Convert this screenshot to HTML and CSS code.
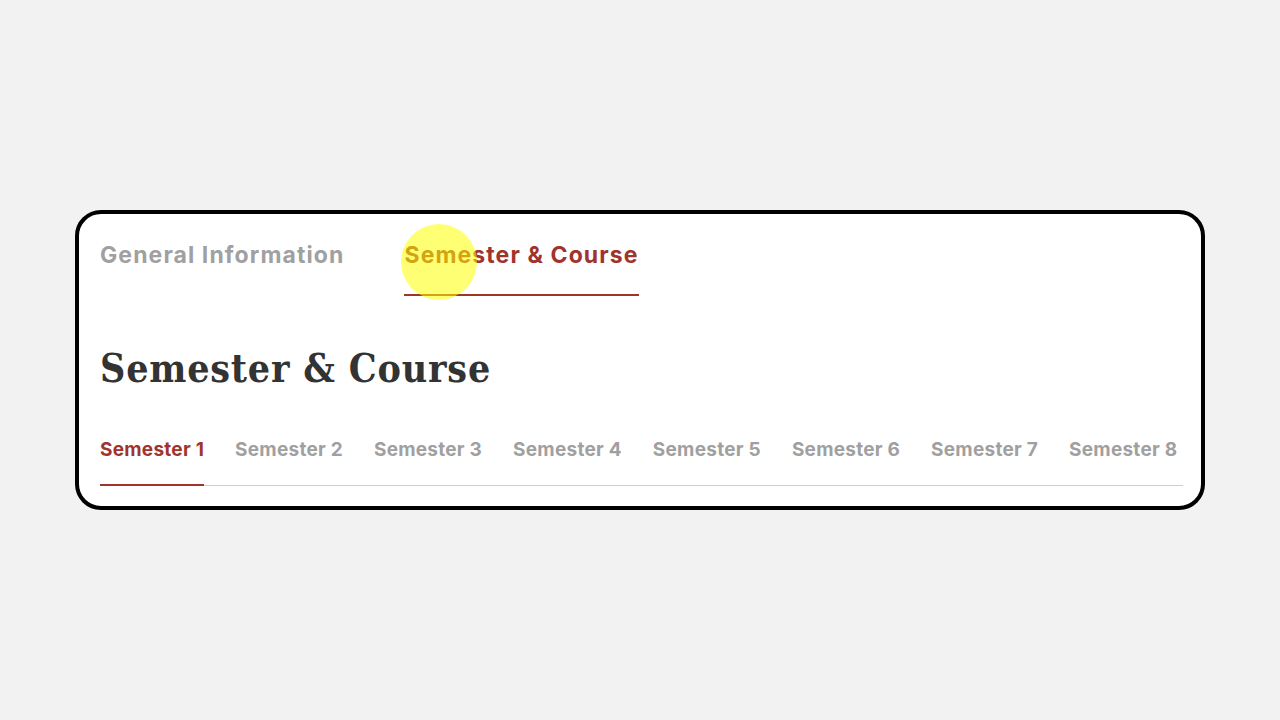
FILE: index.html
```html
<!DOCTYPE html>
<html>
<head>
<meta charset="utf-8">
<link rel="stylesheet" href="styles.css">
</head>
<body>
<div class="card">
  <nav class="main-tabs">
    <div class="main-tab">General Information</div>
    <div class="main-tab active">Semester &amp; Course<span class="click-dot"></span></div>
  </nav>
  <h1 class="title">Semester &amp; Course</h1>
  <nav class="sem-tabs">
    <div class="sem-tab active">Semester 1</div>
    <div class="sem-tab">Semester 2</div>
    <div class="sem-tab">Semester 3</div>
    <div class="sem-tab">Semester 4</div>
    <div class="sem-tab">Semester 5</div>
    <div class="sem-tab">Semester 6</div>
    <div class="sem-tab">Semester 7</div>
    <div class="sem-tab">Semester 8</div>
  </nav>
</div>
</body>
</html>
```
FILE: styles.css
```css
html, body { margin: 0; padding: 0; }
body {
  background: #f2f2f2;
  height: 720px;
  display: flex;
  align-items: center;
  justify-content: center;
  font-family: "Inter", "Liberation Sans", sans-serif;
}
.card {
  box-sizing: border-box;
  width: 1130px;
  height: 300px;
  background: #fff;
  border: 4px solid #000;
  border-radius: 26px;
  padding: 14px 18px 0 21px;
}
.main-tabs {
  display: flex;
  gap: 60px;
}
.main-tab {
  position: relative;
  font-size: 23px;
  font-weight: 700;
  letter-spacing: 1.1px;
  color: #a0a0a0;
  padding: 12px 0 24px;
  line-height: 30px;
}
.main-tab.active {
  color: #a0342c;
  border-bottom: 2px solid #a0342c;
}
.click-dot {
  position: absolute;
  left: -3px;
  top: -4px;
  width: 76px;
  height: 76px;
  border-radius: 50%;
  background: rgba(255, 255, 0, 0.55);
}
.title {
  margin: 48px 0 0;
  font-family: "DejaVu Serif Condensed", "DejaVu Serif", serif;
  font-stretch: condensed;
  font-size: 39px;
  font-weight: 700;
  letter-spacing: 0.8px;
  color: #333;
  line-height: 48px;
}
.sem-tabs {
  margin-top: 46px;
  display: flex;
  gap: 31px;
  border-bottom: 1px solid #cfcfcf;
}
.sem-tab {
  font-size: 19px;
  font-weight: 700;
  letter-spacing: 0.25px;
  color: #a0a0a0;
  padding-bottom: 22px;
  line-height: 24px;
  margin-bottom: -1px;
}
.sem-tab.active {
  color: #a0342c;
  border-bottom: 2px solid #a0342c;
}
```
